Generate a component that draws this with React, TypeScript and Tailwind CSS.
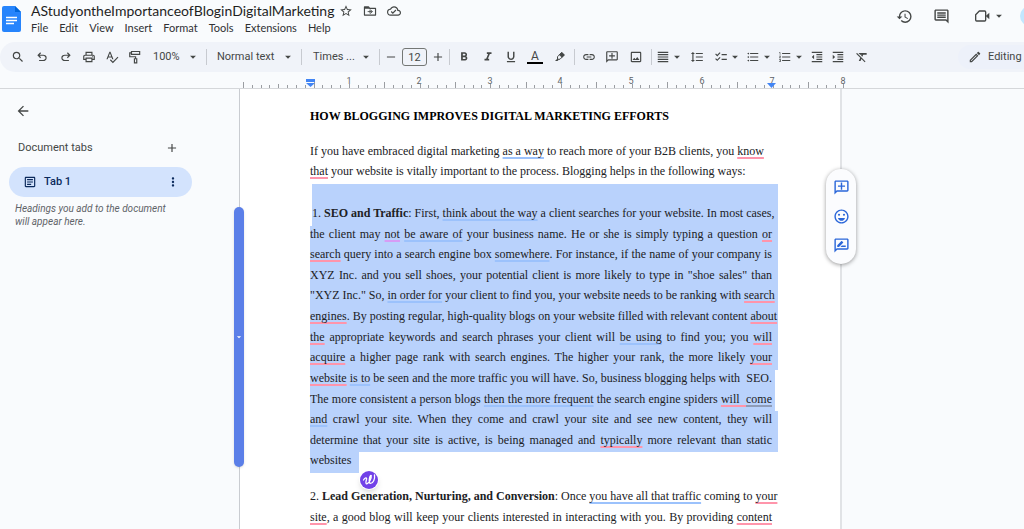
import type { ReactNode } from "react";
import type { IconType } from "react-icons";
import {
    MdAdd, MdArrowBack, MdArrowDropDown, MdChecklist, MdFormatAlignJustify, MdFormatBold, MdFormatClear,
    MdFormatIndentDecrease, MdFormatIndentIncrease, MdFormatItalic, MdFormatLineSpacing, MdFormatListBulleted,
    MdFormatListNumbered, MdFormatUnderlined, MdHistory, MdLink, MdMoreVert, MdOutlineAddComment, MdOutlineArticle,
    MdOutlineCloudDone, MdOutlineComment, MdOutlineEdit, MdOutlineEmojiEmotions,
    MdOutlineImage, MdOutlinePrint, MdOutlineRateReview, MdRemove, MdSearch, MdSpellcheck, MdStarBorder,
} from "react-icons/md";

const menus = ["File", "Edit", "View", "Insert", "Format", "Tools", "Extensions", "Help"];

type IconProps = { className?: string };

function UndoIcon({ className }: IconProps) {
    return (
        <svg viewBox="0 -960 960 960" fill="currentColor" className={className} aria-hidden="true">
            <path d="M280-200v-80h284q63 0 109.5-40T720-420q0-60-46.5-100T564-560H312l104 104-56 56-200-200 200-200 56 56-104 104h252q97 0 169.5 63T800-420q0 94-72.5 157T564-200H280Z" />
        </svg>
    );
}

function FolderIcon({ className }: IconProps) {
    return (
        <svg viewBox="0 0 24 24" fill="none" stroke="currentColor" strokeWidth="2" className={className} aria-hidden="true">
            <path d="M2.500 5h7l2 2.500h10V19h-19z" strokeLinejoin="round" />
            <path d="M2.500 5h7l2 3h-9z" fill="currentColor" stroke="none" />
            <path d="M8 13h8M12.500 9.500 16 13l-3.500 3.500M12 10v6" strokeWidth="1.500" />
        </svg>
    );
}

function RollerIcon({ className }: IconProps) {
    return (
        <svg viewBox="0 0 24 24" fill="none" stroke="currentColor" strokeWidth="2" className={className} aria-hidden="true">
            <path d="M6 2.500h14v5H6zM6 5H3v6.500h10V15" />
            <path d="M11 15h4v7h-4z" />
        </svg>
    );
}

function HighlightIcon({ className }: IconProps) {
    return (
        <svg viewBox="0 0 24 24" fill="none" stroke="currentColor" strokeWidth="2" className={className} aria-hidden="true">
            <path d="M7 11.500 15.500 3l5 5-8.500 8.500H7z" strokeLinejoin="round" />
            <path d="m11 7.500 5 5L20.500 8l-5-5z" fill="currentColor" />
            <path d="m2 20 5-5 2.500 2.500L7 20z" fill="currentColor" stroke="none" />
        </svg>
    );
}

function VideoIcon({ className }: IconProps) {
    return (
        <svg viewBox="0 0 24 24" fill="none" stroke="currentColor" strokeWidth="2" className={className} aria-hidden="true">
            <path d="M8 4.500h8a1.500 1.500 0 0 1 1.500 1.500v12a1.500 1.500 0 0 1-1.500 1.500H4A1.500 1.500 0 0 1 2.500 18v-8z" strokeLinejoin="round" />
            <path d="M18 11.500 23 7v10l-5-4.500z" fill="currentColor" stroke="none" />
        </svg>
    );
}

function DocsLogo() {
    return (
        <svg viewBox="0 0 20 26" className="h-[26px] w-5 shrink-0" aria-label="Docs home">
            <path d="M2 0h11l6 6v18a2 2 0 0 1-2 2H2a2 2 0 0 1-2-2V2a2 2 0 0 1 2-2z" fill="#2684fc" />
            <path d="M13 0l6 6h-6z" fill="#0066da" />
            <path d="M4 11.500h11M4 14.500h11M4 17.500h8" stroke="#fff" strokeWidth="1.500" />
        </svg>
    );
}

function ToolButton({ label, icon: Icon, className = "w-6" }: { label: string; icon: IconType | ((p: IconProps) => ReactNode); className?: string }) {
    return (
        <button aria-label={label} className={`flex h-6 shrink-0 items-center justify-center ${className}`}>
            <Icon className="size-[14px] shrink-0" />
        </button>
    );
}

function DropTool({ label, icon: Icon, className = "w-8" }: { label: string; icon: IconType; className?: string }) {
    return (
        <button aria-label={label} className={`flex h-6 shrink-0 items-center justify-center ${className}`}>
            <Icon className="size-[14px] shrink-0" />
            <MdArrowDropDown className="size-[14px] shrink-0" />
        </button>
    );
}

function Divider() {
    return <div className="h-4 w-px shrink-0 bg-[#c7cad0]" />;
}

function Header() {
    return (
        <header className="flex h-[42px] items-start overflow-hidden">
            <div className="pt-[6px] pl-[2px]">
                <DocsLogo />
            </div>
            <div className="pt-[2px] pl-[9px] font-['Lato',sans-serif]">
                <div className="flex h-[18px] items-center">
                    <h1 className="text-[14px] leading-[18px] whitespace-nowrap text-[#1f1f1f]">AStudyontheImportanceofBloginDigitalMarketing</h1>
                    <div className="flex items-center gap-[10px] pl-[5px] text-[#444746]">
                        <button aria-label="Star"><MdStarBorder className="size-[14px]" /></button>
                        <button aria-label="Move"><FolderIcon className="size-[14px]" /></button>
                        <button aria-label="Document status"><MdOutlineCloudDone className="size-[14px]" /></button>
                    </div>
                </div>
                <nav className="flex h-4 items-center gap-[11px] text-[11px] text-[#303134]">
                    {menus.map((menu) => (
                        <button key={menu}>{menu}</button>
                    ))}
                </nav>
            </div>
            <div className="ml-auto flex items-center pt-[6px] text-[#444746]">
                <button aria-label="Version history" className="mr-5"><MdHistory className="size-[17px]" /></button>
                <button aria-label="Comments" className="mr-6"><MdOutlineComment className="size-[17px]" /></button>
                <button aria-label="Join a call" className="mr-[14px] flex items-center gap-[2px]">
                    <VideoIcon className="size-4" />
                    <MdArrowDropDown className="size-[14px]" />
                </button>
                <button aria-label="Share" className="-mr-4 size-5 rounded-full bg-[#c2e7ff]" />
            </div>
        </header>
    );
}

function Toolbar() {
    return (
        <div role="toolbar" className="flex h-[30px] items-center overflow-hidden rounded-l-full bg-[#f0f3f9] pl-[6px] text-[11px] text-[#444746]">
            <ToolButton label="Search the menus" icon={MdSearch} />
            <ToolButton label="Undo" icon={UndoIcon} />
            <ToolButton label="Redo" icon={() => <UndoIcon className="size-[14px] -scale-x-100" />} />
            <ToolButton label="Print" icon={MdOutlinePrint} className="w-[22px]" />
            <ToolButton label="Spelling and grammar check" icon={MdSpellcheck} />
            <ToolButton label="Paint format" icon={RollerIcon} className="w-[22px]" />
            <button className="mr-[6px] flex h-6 w-[54px] shrink-0 items-center justify-between pl-[7px]">
                100% <MdArrowDropDown className="size-[14px]" />
            </button>
            <Divider />
            <button className="mr-[6px] flex h-6 w-[88px] shrink-0 items-center justify-between pl-[10px]">
                Normal text <MdArrowDropDown className="size-[14px]" />
            </button>
            <Divider />
            <button className="mr-[6px] flex h-6 w-[71px] shrink-0 items-center justify-between pl-[11px]">
                Times ... <MdArrowDropDown className="size-[14px]" />
            </button>
            <Divider />
            <ToolButton label="Decrease font size" icon={MdRemove} className="w-[22px]" />
            <input aria-label="Font size" defaultValue="12" className="h-[18px] w-[25px] shrink-0 rounded-[3px] border border-[#747775] text-center text-[11px]" />
            <ToolButton label="Increase font size" icon={MdAdd} className="w-[22px]" />
            <Divider />
            <ToolButton label="Bold" icon={MdFormatBold} className="ml-[2px] w-6" />
            <ToolButton label="Italic" icon={MdFormatItalic} />
            <ToolButton label="Underline" icon={MdFormatUnderlined} className="w-[22px]" />
            <button aria-label="Text color" className="flex h-6 w-[26px] shrink-0 flex-col items-center justify-center">
                <span className="text-[12px] leading-3">A</span>
                <span className="h-[2px] w-4 bg-black" />
            </button>
            <ToolButton label="Highlight color" icon={() => <HighlightIcon className="size-3" />} className="mr-[2px] w-6" />
            <Divider />
            <ToolButton label="Insert link" icon={MdLink} className="ml-[2px] w-6" />
            <ToolButton label="Add comment" icon={() => <MdOutlineAddComment className="size-[14px] -scale-x-100" />} className="w-[22px]" />
            <ToolButton label="Insert image" icon={MdOutlineImage} className="mr-[2px] w-[26px]" />
            <Divider />
            <DropTool label="Align" icon={MdFormatAlignJustify} className="w-9" />
            <ToolButton label="Line spacing" icon={MdFormatLineSpacing} className="mr-[6px] w-[18px]" />
            <DropTool label="Checklist" icon={MdChecklist} />
            <DropTool label="Bulleted list" icon={MdFormatListBulleted} />
            <DropTool label="Numbered list" icon={MdFormatListNumbered} />
            <ToolButton label="Decrease indent" icon={MdFormatIndentDecrease} className="w-[18px]" />
            <ToolButton label="Increase indent" icon={MdFormatIndentIncrease} />
            <ToolButton label="Clear formatting" icon={MdFormatClear} />
            <button className="ml-auto flex h-6 w-[66px] shrink-0 items-center gap-[6px] rounded-l-full bg-[#edf1fa] pl-[10px] whitespace-nowrap">
                <MdOutlineEdit className="size-[14px] shrink-0" /> Editing
            </button>
        </div>
    );
}

const tickCount = 69;
const inches = [1, 2, 3, 4, 5, 6, 7, 8];

function Ruler() {
    return (
        <div className="flex h-[17px] border-b border-[#d5d7da] pl-[239px]">
            <svg width="612" height="16" viewBox="0 0 612 16" className="shrink-0" aria-hidden="true">
                {Array.from({ length: tickCount }, (_, i) => {
                    const top = i % 8 === 0 ? 10 : i % 8 === 4 ? 12 : 13;
                    return <path key={i} d={`M${4.5 + Math.round(i * 8.83)} ${top}V16`} stroke="#9a9da1" />;
                })}
                {inches.map((n) => (
                    <text key={n} x={39 + Math.round(n * 70.6)} y="12" textAnchor="middle" fontSize="9" fill="#5f6368">{n}</text>
                ))}
                <path d="M67 7h9v3h-9zM67 11h9l-4.500 4z" fill="#4285f4" />
                <path d="M528 11h9l-4.500 5z" fill="#4285f4" />
            </svg>
        </div>
    );
}

function TabsPanel() {
    return (
        <aside className="flex w-[239px] shrink-0 flex-col pr-12 pl-[9px]">
            <button aria-label="Close tabs" className="mt-[14px] ml-[6px] self-start text-[#444746]">
                <MdArrowBack className="size-4" />
            </button>
            <div className="mt-[22px] flex h-[14px] items-center justify-between pr-3 pl-[9px] text-[#444746]">
                <h2 className="text-[11px]">Document tabs</h2>
                <button aria-label="Add tab"><MdAdd className="size-[14px]" /></button>
            </div>
            <div className="mt-3 -mr-px flex h-[30px] items-center rounded-full bg-[#d3e3fd] pr-3 pl-[14px] text-[#0b2a5c]">
                <MdOutlineArticle className="size-[14px]" />
                <a href="#tab-1" className="pl-[7px] text-[11px] font-medium">Tab 1</a>
                <button aria-label="Tab options" className="ml-auto"><MdMoreVert className="size-[14px]" /></button>
            </div>
            <p className="mt-[5px] pr-4 pl-[6px] text-[10px] leading-[13px] text-[#5f6368] italic">
                Headings you add to the document will appear here.
            </p>
        </aside>
    );
}

const marks = {
    red: "decoration-[#ff95ab]",
    blue: "decoration-[#9cc2fc]",
    pink: "decoration-[#d79cf5]",
    gray: "decoration-[#8e9cb8]",
};

function Mark({ tone, children }: { tone: keyof typeof marks; children: ReactNode }) {
    return <span className={`underline decoration-2 underline-offset-2 [text-decoration-skip-ink:none] ${marks[tone]}`}>{children}</span>;
}

const seoLines: ReactNode[] = [
    <>1. <b>SEO and Traffic</b>: First, <Mark tone="blue">think about the way</Mark> a client searches for your website. In most cases,</>,
    <>the client may <Mark tone="pink">not</Mark> <Mark tone="blue">be aware of</Mark> your business name. He or she is simply typing a question <Mark tone="red">or</Mark></>,
    <><Mark tone="red">search</Mark> query into a search engine box <Mark tone="blue">somewhere</Mark>. For instance, if the name of your company is</>,
    <>XYZ Inc. and you sell shoes, your potential client is more likely to type in "shoe sales" than</>,
    <>"XYZ Inc." So, <Mark tone="blue">in order for</Mark> your client to find you, your website needs to be ranking with <Mark tone="red">search</Mark></>,
    <><Mark tone="red">engines</Mark>. By posting regular, high-quality blogs on your website filled with relevant content <Mark tone="red">about</Mark></>,
    <><Mark tone="red">the</Mark> appropriate keywords and search phrases your client will <Mark tone="blue">be using</Mark> to find you; you <Mark tone="red">will</Mark></>,
    <><Mark tone="red">acquire</Mark> a higher page rank with search engines. The higher your rank, the more likely <Mark tone="red">your</Mark></>,
    <><Mark tone="red">website</Mark> <Mark tone="blue">is to</Mark> be seen and the more traffic you will have. So, business blogging helps with&nbsp; SEO.</>,
    <>The more consistent a person blogs <Mark tone="blue">then the more frequent</Mark> the search engine spiders <Mark tone="red">will&nbsp; </Mark><Mark tone="gray">come</Mark></>,
    <><Mark tone="blue">and</Mark> crawl your site. When they come and crawl your site and see new content, they will</>,
    <>determine that your site is active, is being managed and <Mark tone="red">typically</Mark> more relevant than static</>,
];

// the selection runs a little past the right edge of the text
function lineClass(i: number) {
    if (i === 0) return "ml-[2px] mr-[-6px] pr-[6px]";
    if (i === 8 || i === 9) return "mr-[-3px] pr-[3px]";
    return "mr-[-6px] pr-[6px]";
}

function DocumentPage() {
    return (
        <main className="relative w-[603px] shrink-0 border-r-2 border-l border-r-[#e1e3e6] border-l-[#c9ccd1] bg-white pr-[68px] pl-[70px] font-['Liberation_Serif',serif] text-[12px] leading-5 text-[#202124]">
            <h2 className="mt-[17px] font-bold whitespace-nowrap text-black">HOW BLOGGING IMPROVES DIGITAL MARKETING EFFORTS</h2>
            <p className="mt-[15px] whitespace-nowrap">
                <span className="block">If you have embraced digital marketing <Mark tone="blue">as a way</Mark> to reach more of your B2B clients, you <Mark tone="red">know</Mark></span>
                <span className="block"><Mark tone="red">that</Mark> your website is vitally important to the process. Blogging helps in the following ways:</span>
            </p>
            <div className="mt-[3px] mr-[-6px] ml-[2px] h-[21px] bg-[#b9d2fc]" />
            <p className="grid h-[268px] auto-rows-fr grid-cols-[minmax(0,1fr)] leading-[17px] whitespace-nowrap">
                {seoLines.map((line, i) => (
                    <span key={i} className={`bg-[#b9d2fc] text-justify [text-align-last:justify] ${lineClass(i)}`}>{line}</span>
                ))}
                <span className="justify-self-start bg-[#b9d2fc] pr-2">websites</span>
            </p>
            <p className="mt-[13px] grid h-[41px] auto-rows-fr grid-cols-[minmax(0,1fr)] text-justify whitespace-nowrap [text-align-last:justify]">
                <span>2. <b>Lead Generation, Nurturing, and Conversion</b>: Once <Mark tone="blue">you have all that traffic</Mark> coming to <Mark tone="red">your</Mark></span>
                <span><Mark tone="red">site</Mark>, a good blog will keep your clients interested in interacting with you. By providing <Mark tone="red">content</Mark></span>
            </p>

            {/* Side handle */}
            <button aria-label="Expand side panel" className="absolute top-[118px] -left-[6px] flex h-[260px] w-[10px] items-center justify-center rounded-[5px] bg-[#5b7fe8] text-white shadow">
                <MdArrowDropDown className="size-[10px] shrink-0" />
            </button>

            {/* Writing assistant bubble */}
            <button aria-label="Writing assistant" className="absolute top-[381px] left-[119px] flex size-5 items-center justify-center rounded-full bg-white shadow-md">
                <svg viewBox="0 0 18 18" className="size-[18px]" aria-hidden="true">
                    <circle cx="9" cy="9" r="9" fill="#7141e8" />
                    <path d="M3.500 9c1.500-2.500 3.700-3 3-.5-.8 2.600-1 4.800.7 4.200 2.200-.8 4.400-5.500 4-8.200-1.500-.8-3.200 7.900-.7 7.900 2.600 0 4.700-4.200 4-8.600" fill="none" stroke="#fff" strokeWidth="1.300" strokeLinecap="round" />
                </svg>
            </button>

            {/* Comment actions */}
            <div className="absolute top-20 -right-4 flex h-[95px] w-[30px] flex-col items-center justify-between rounded-full bg-[#fbfcfe] py-[10px] text-[#2a66d9] shadow-[0_1px_4px_rgba(0,0,0,0.4)]">
                <button aria-label="Add comment"><MdOutlineAddComment className="size-[17px] -scale-x-100" /></button>
                <button aria-label="Add emoji reaction"><MdOutlineEmojiEmotions className="size-[17px]" /></button>
                <button aria-label="Suggest edits"><MdOutlineRateReview className="size-[17px]" /></button>
            </div>
        </main>
    );
}

export default function App() {
    return (
        <div className="flex h-screen flex-col overflow-hidden bg-[#f9fbfd] font-['Roboto',sans-serif]">
            <Header />
            <Toolbar />
            <Ruler />
            <div className="flex min-h-0 flex-1">
                <TabsPanel />
                <DocumentPage />
            </div>
        </div>
    );
}
